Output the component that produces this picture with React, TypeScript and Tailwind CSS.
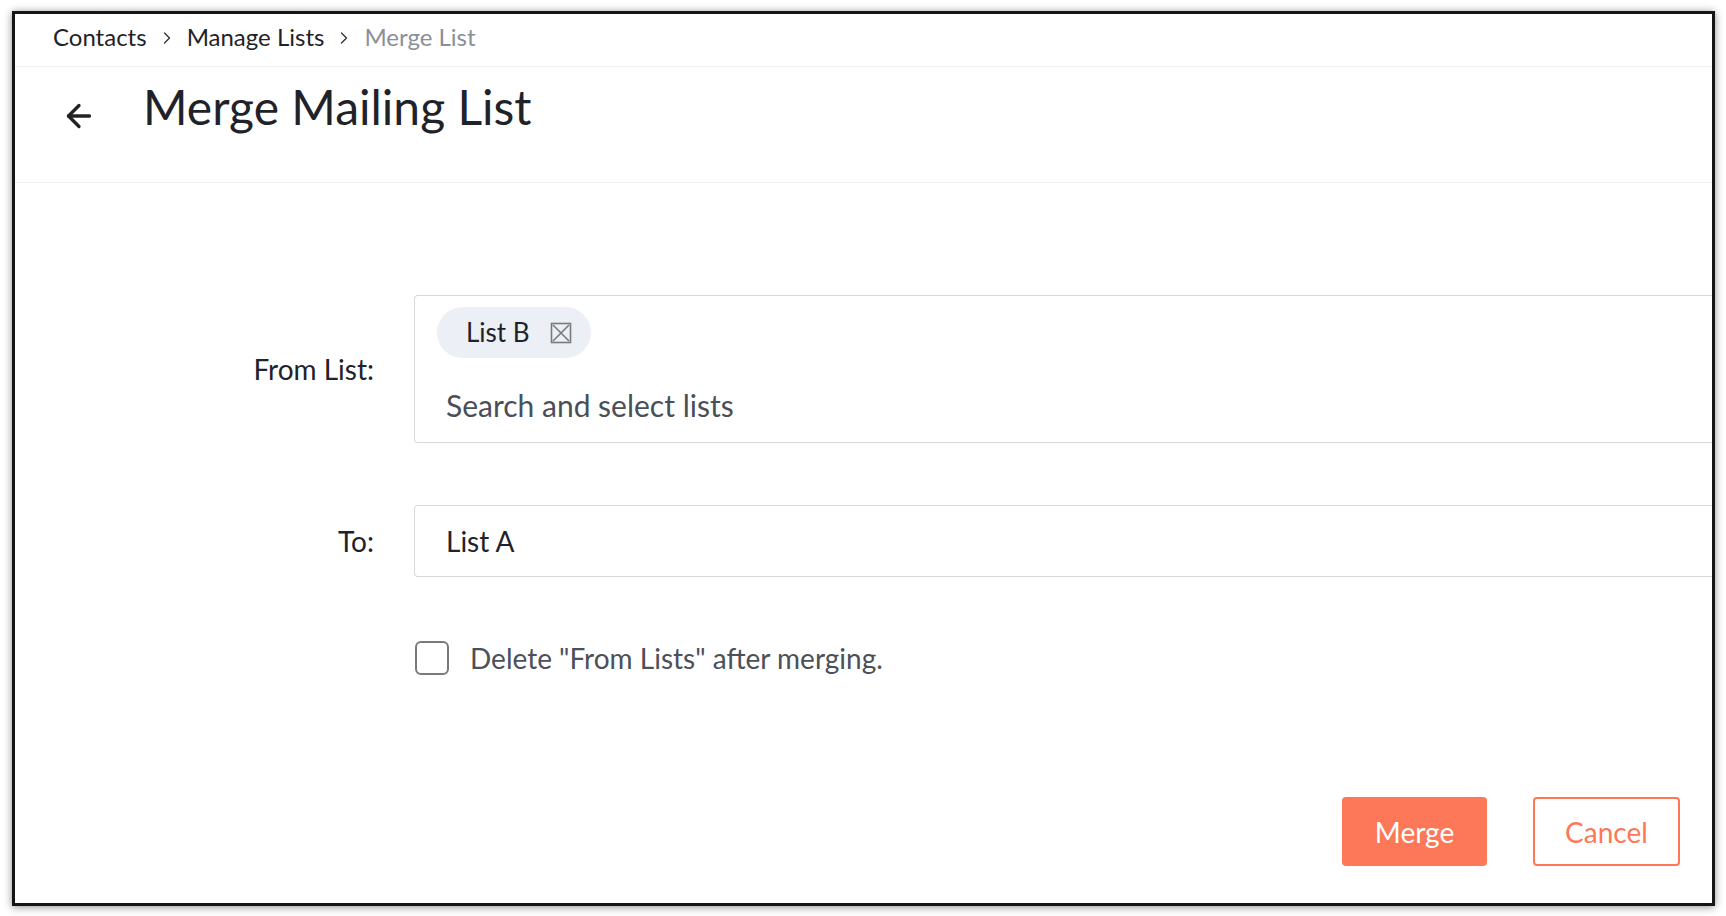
import { ArrowLeft, ChevronRight } from 'lucide-react';

const ChipClose = () => (
    <svg width="22" height="22" viewBox="0 0 22 22" fill="none">
        <rect x="1.5" y="1.5" width="19" height="19" stroke="#7a7a7a" strokeWidth="1.6" />
        <path d="M3 3 L19 19 M19 3 L3 19" stroke="#7a7a7a" strokeWidth="1.6" />
    </svg>
);

const App = () => {
    return (
        <div className="min-h-screen bg-white pt-[11px] pl-[12px] font-['Lato','Noto_Sans',sans-serif]">
            <div className="w-[1703px] h-[895px] border-[3px] border-[#151515] bg-white shadow-[0_1px_8px_rgba(0,0,0,0.45)] overflow-hidden flex flex-col">
                <div className="h-[53px] flex items-center pl-[38px] pb-[6px] border-b border-[#f0f2f5] text-[24px] text-[#1f2329]">
                    <span>Contacts</span>
                    <ChevronRight size={20} strokeWidth={1.6} className="mx-[10px] mt-[2px] text-[#333]" />
                    <span>Manage Lists</span>
                    <ChevronRight size={20} strokeWidth={1.6} className="mx-[10px] mt-[2px] text-[#333]" />
                    <span className="text-[#8a8f98]">Merge List</span>
                </div>

                <div className="h-[116px] flex items-start pl-[46px] pt-[11px] border-b border-[#f0f2f5]">
                    <ArrowLeft size={36} strokeWidth={2.2} className="mt-[20px] text-[#222]" />
                    <h1 className="ml-[46px] text-[48px] leading-[58px] text-[#1f2329]">Merge Mailing List</h1>
                </div>

                <div className="flex flex-col pt-[112px]">
                    <div className="flex items-center">
                        <label className="w-[399px] pr-[40px] text-right text-[28px] text-[#1f2329]">From List:</label>
                        <div className="flex-1 h-[148px] border border-r-0 border-[#d9d9d9] rounded-l-[4px] pl-[22px] pt-[11px]">
                            <div className="inline-flex items-center h-[51px] bg-[#eceff5] rounded-full pl-[29px] pr-[19px] gap-[20px] text-[26px] text-[#1f2329]">
                                <span>List B</span>
                                <ChipClose />
                            </div>
                            <div className="mt-[25px] pl-[9px] text-[30px] text-[#4a4f57]">Search and select lists</div>
                        </div>
                    </div>

                    <div className="flex items-center mt-[62px]">
                        <label className="w-[399px] pr-[40px] text-right text-[28px] text-[#1f2329]">To:</label>
                        <div className="flex-1 h-[72px] flex items-center border border-r-0 border-[#d9d9d9] rounded-l-[4px] pl-[31px] text-[28px] text-[#1f2329]">
                            List A
                        </div>
                    </div>

                    <div className="flex items-center mt-[60px] ml-[400px]">
                        <div className="w-[34px] h-[34px] border-2 border-[#7a7a7a] rounded-[6px]" />
                        <span className="ml-[21px] text-[28px] text-[#4b5059]">Delete "From Lists" after merging.</span>
                    </div>

                    <div className="flex justify-end gap-[46px] pr-[32px] mt-[118px]">
                        <button className="w-[145px] h-[69px] bg-[#fd7858] rounded-[4px] text-white text-[28px]">Merge</button>
                        <button className="w-[147px] h-[69px] border-2 border-[#fd7858] rounded-[4px] text-[#fd7858] text-[28px]">Cancel</button>
                    </div>
                </div>
            </div>
        </div>
    );
};

export default App;
